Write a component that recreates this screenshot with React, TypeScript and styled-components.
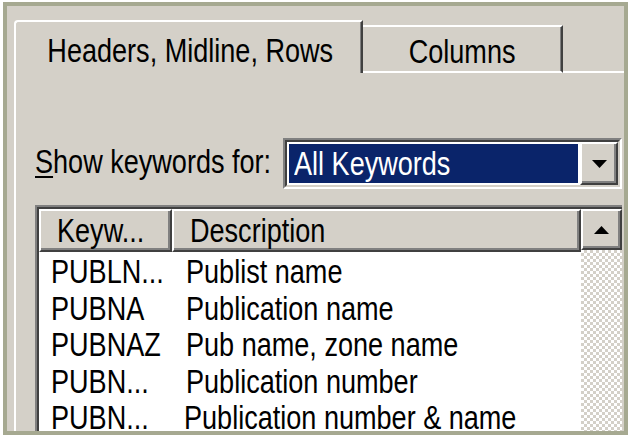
import * as React from 'react';
import styled, { createGlobalStyle } from 'styled-components';

interface KeywordRow {
  keyword: string;
  description: string;
}

const rows: KeywordRow[] = [
  { keyword: 'PUBLN...', description: 'Publist name' },
  { keyword: 'PUBNA', description: 'Publication name' },
  { keyword: 'PUBNAZ', description: 'Pub name, zone name' },
  { keyword: 'PUBN...', description: 'Publication number' },
  { keyword: 'PUBN...', description: 'Publication number & name' },
];

const GlobalStyle = createGlobalStyle`
  html, body {
    margin: 0;
    padding: 0;
    background: #ffffff;
  }
  body {
    font-family: "Liberation Sans", Arial, sans-serif;
  }
`;

// the old dialog font is tall and narrow, so squeeze Liberation Sans sideways
const Narrow = styled.span<{ $center?: boolean }>`
  display: inline-block;
  white-space: nowrap;
  transform: scaleX(0.82);
  transform-origin: ${p => (p.$center ? 'center' : 'left')} center;
`;

const Frame = styled.div`
  box-sizing: border-box;
  width: 625px;
  height: 433px;
  margin: 2px 3px 0 3px;
  border: 4px solid #a6a991;
  background: #d4d0c8;
  padding: 14px 0 0 7px;
  display: flex;
  flex-direction: column;
  overflow: hidden;
  font-size: 33px;
  color: #000000;
`;

const TabRow = styled.div`
  display: flex;
  align-items: flex-end;
  height: 53px;
  flex-shrink: 0;
`;

const Tab = styled.div<{ $active?: boolean; $width: number }>`
  box-sizing: border-box;
  width: ${p => p.$width}px;
  height: ${p => (p.$active ? 53 : 48)}px;
  padding-top: ${p => (p.$active ? 11 : 7)}px;
  border-top: 2px solid #ffffff;
  border-left: ${p => (p.$active ? '2px solid #ffffff' : 'none')};
  border-right: 2px solid #404040;
  border-bottom: ${p => (p.$active ? 'none' : '2px solid #ffffff')};
  border-top-left-radius: ${p => (p.$active ? 4 : 0)}px;
  box-shadow: inset -1px 0 #808080;
  line-height: 36px;
  text-align: center;
  white-space: nowrap;
  overflow: hidden;
`;

const TabFiller = styled.div`
  flex: 1;
  height: 2px;
  background: #ffffff;
`;

const Panel = styled.div`
  flex: 1;
  min-height: 0;
  display: flex;
  flex-direction: column;
  border-left: 2px solid #ffffff;
  padding: 65px 2px 0 19px;
`;

const FilterRow = styled.div`
  display: flex;
  align-items: center;
  height: 51px;
  flex-shrink: 0;
`;

const Label = styled.span`
  flex: 1;
  min-width: 0;
  line-height: 38px;
  margin-top: -3px;
`;

const Mnemonic = styled.span`
  text-decoration: underline;
  text-underline-offset: 3px;
  text-decoration-thickness: 2px;
`;

const Combo = styled.div`
  box-sizing: border-box;
  width: 339px;
  height: 51px;
  flex-shrink: 0;
  border: 2px solid;
  border-color: #808080 #ffffff #ffffff #808080;
`;

const ComboField = styled.div`
  box-sizing: border-box;
  height: 100%;
  display: flex;
  border: 2px solid;
  border-color: #404040 #d4d0c8 #d4d0c8 #404040;
  background: #ffffff;
`;

const ComboValue = styled.div`
  flex: 1;
  margin: 2px;
  padding-left: 5px;
  display: flex;
  align-items: center;
  background: #0a246a;
  color: #ffffff;
  line-height: 38px;
  overflow: hidden;
`;

const RaisedButton = styled.div<{ $w: number; $h?: number }>`
  box-sizing: border-box;
  width: ${p => p.$w}px;
  height: ${p => (p.$h ? `${p.$h}px` : 'auto')};
  flex-shrink: 0;
  display: flex;
  align-items: center;
  justify-content: center;
  background: #d4d0c8;
  border: 2px solid;
  border-color: #ffffff #404040 #404040 #ffffff;
  box-shadow: inset -2px -2px #808080;
`;

const ListOuter = styled.div`
  flex: 1;
  min-height: 0;
  margin-top: 16px;
  border-top: 2px solid #808080;
  border-left: 2px solid #808080;
`;

const ListInner = styled.div`
  box-sizing: border-box;
  height: 100%;
  display: flex;
  border-top: 2px solid #404040;
  border-left: 2px solid #404040;
  background: #ffffff;
`;

const MainColumn = styled.div`
  flex: 1;
  min-width: 0;
  display: flex;
  flex-direction: column;
`;

const Header = styled.div`
  display: flex;
  height: 43px;
  flex-shrink: 0;
  margin-bottom: 2px;
`;

const HeaderCell = styled.div<{ $width?: number }>`
  box-sizing: border-box;
  ${p => (p.$width ? `width: ${p.$width}px;` : 'flex: 1;')}
  display: flex;
  align-items: center;
  padding-left: 16px;
  background: #d4d0c8;
  border: 2px solid;
  border-color: #ffffff #404040 #404040 #ffffff;
  box-shadow: inset -2px -2px #808080;
  line-height: 38px;
  overflow: hidden;
`;

const Row = styled.div`
  display: flex;
  height: 36.5px;
  line-height: 36.5px;
  flex-shrink: 0;
`;

const KeyCell = styled.div`
  width: 133px;
  box-sizing: border-box;
  padding-left: 12px;
`;

const DescCell = styled.div`
  flex: 1;
  padding-left: 14px;
`;

const ScrollBar = styled.div`
  width: 41px;
  display: flex;
  flex-direction: column;
  flex-shrink: 0;
`;

const Track = styled.div`
  flex: 1;
  background: repeating-conic-gradient(#d4d0c8 0 25%, #ffffff 0 50%) 0 0 / 6px 6px;
`;

function Arrow({ up }: { up?: boolean }) {
  return (
    <svg width="15" height="8" viewBox="0 0 15 8">
      <polygon points={up ? '7.5,0 15,8 0,8' : '0,0 15,0 7.5,8'} fill="#000" />
    </svg>
  );
}

export default function App() {
  return (
    <>
      <GlobalStyle />
      <Frame>
        <TabRow>
          <Tab $active $width={349}>
            <Narrow $center>Headers, Midline, Rows</Narrow>
          </Tab>
          <Tab $width={200}>
            <Narrow $center>Columns</Narrow>
          </Tab>
          <TabFiller />
        </TabRow>
        <Panel>
          <FilterRow>
            <Label>
              <Narrow>
                <Mnemonic>S</Mnemonic>how keywords for:
              </Narrow>
            </Label>
            <Combo>
              <ComboField>
                <ComboValue>
                  <Narrow>All Keywords</Narrow>
                </ComboValue>
                <RaisedButton $w={38}>
                  <Arrow />
                </RaisedButton>
              </ComboField>
            </Combo>
          </FilterRow>
          <ListOuter>
            <ListInner>
              <MainColumn>
                <Header>
                  <HeaderCell $width={133}>
                    <Narrow>Keyw...</Narrow>
                  </HeaderCell>
                  <HeaderCell>
                    <Narrow>Description</Narrow>
                  </HeaderCell>
                </Header>
                {rows.map((row, i) => (
                  <Row key={i}>
                    <KeyCell>
                      <Narrow>{row.keyword}</Narrow>
                    </KeyCell>
                    <DescCell>
                      <Narrow>{row.description}</Narrow>
                    </DescCell>
                  </Row>
                ))}
              </MainColumn>
              <ScrollBar>
                <RaisedButton $w={41} $h={41}>
                  <Arrow up />
                </RaisedButton>
                <Track />
              </ScrollBar>
            </ListInner>
          </ListOuter>
        </Panel>
      </Frame>
    </>
  );
}
